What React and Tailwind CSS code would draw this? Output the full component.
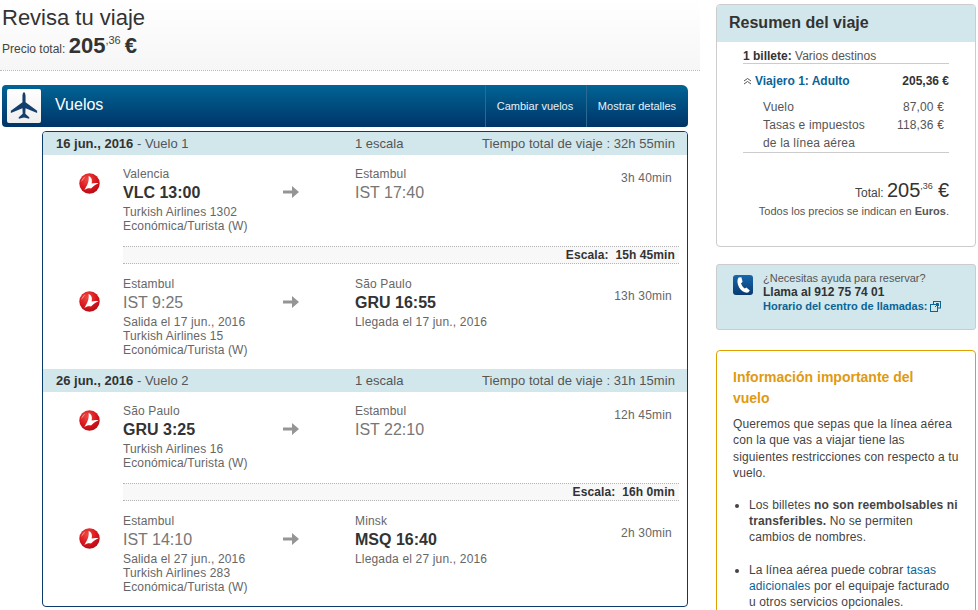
import React from "react";

function TkLogo() {
  return (
    <svg width="21" height="21" viewBox="0 0 21 21" className="block">
      <defs>
        <radialGradient id="tk" cx="40%" cy="30%" r="75%">
          <stop offset="0%" stopColor="#f04a44" />
          <stop offset="60%" stopColor="#d8141c" />
          <stop offset="100%" stopColor="#b00d14" />
        </radialGradient>
      </defs>
      <circle cx="10.5" cy="10.5" r="10.2" fill="url(#tk)" />
      <path d="M9.5 3 C12.5 4 13.5 7 12.6 10.6 C14.8 10 17.2 9.8 19.6 10.4 C16.5 11.4 14 13 12 15.6 C10 15 7.5 15.4 5.4 17 C7.5 13.5 10.6 8.6 9.5 3 Z" fill="#fff" />
      <path d="M2 9 C3 6 4.5 4.5 6.5 3.5 C5 5.5 3.5 7.5 2 9 Z" fill="#f9a09a" />
    </svg>
  );
}

function Arrow() {
  return (
    <svg width="16" height="14" viewBox="0 0 16 14" className="block">
      <path d="M0 5.5 H9 V1 L16 7 L9 13 V8.5 H0 Z" fill="#959595" />
    </svg>
  );
}

function Plane() {
  return (
    <svg width="34" height="34" viewBox="0 0 34 34" className="block">
      <path d="M17 0 C18.4 1 18.9 3 18.9 5 V12.5 L33 22.8 V25.4 L18.9 19.6 L18.6 26.6 L23.4 30.8 V32.4 L17 31 L10.6 32.4 V30.8 L15.4 26.6 L15.1 19.6 L1 25.4 V22.8 L15.1 12.5 V5 C15.1 3 15.6 1 17 0 Z" fill="#143f6c" />
    </svg>
  );
}

function Segment({ logoTop, textTop, durTop, fromCity, from, fromBold, sub, toCity, to, toBold, toSub, dur, h }) {
  return (
    <div className={`flex pl-[36px] ${h}`}>
      <div className="w-[21px] shrink-0" style={{ paddingTop: logoTop }}>
        <TkLogo />
      </div>
      <div className="ml-[23px] w-[160px] shrink-0" style={{ paddingTop: textTop }}>
        <div className="text-[12px] leading-[15px] tracking-[0.15px] text-[#666]">{fromCity}</div>
        <div className={`text-[16px] leading-[22px] ${fromBold ? "font-bold text-[#333]" : "text-[#777]"}`}>{from}</div>
        <div className="mt-[1px] text-[12px] leading-[14px] tracking-[0.15px] text-[#666]">
          {sub.map((s) => (
            <div key={s}>{s}</div>
          ))}
        </div>
      </div>
      <div className="w-[72px] shrink-0" style={{ paddingTop: textTop + 18 }}>
        <Arrow />
      </div>
      <div className="w-[160px] shrink-0" style={{ paddingTop: textTop }}>
        <div className="text-[12px] leading-[15px] tracking-[0.15px] text-[#666]">{toCity}</div>
        <div className={`text-[16px] leading-[22px] ${toBold ? "font-bold text-[#333]" : "text-[#777]"}`}>{to}</div>
        <div className="mt-[1px] text-[12px] leading-[14px] tracking-[0.17px] text-[#666]">{toSub}</div>
      </div>
      <div className="flex-1 pr-[15px] text-right text-[12px] leading-[14px] tracking-[0.2px] text-[#666]" style={{ paddingTop: durTop }}>{dur}</div>
    </div>
  );
}

function Layover({ text }) {
  return (
    <div className="ml-[80px] mr-[8px] h-[18px] whitespace-pre border-y border-dotted border-[#b5b5b5] bg-[#f8f8f8] pr-[4px] text-right text-[12px] leading-[16px] font-bold tracking-[0.1px] text-[#333]">
      {text}
    </div>
  );
}

function DayHeader({ date, n, total }) {
  return (
    <div className="flex h-[23px] bg-[#d2e7ec] pl-[13px] pr-[12px] text-[13px] leading-[23px] text-[#555]">
      <div className="w-[299px] shrink-0">
        <span className="font-bold text-[#333]">{date}</span> - {n}
      </div>
      <div>1 escala</div>
      <div className="ml-auto tracking-[0.06px]">{total}</div>
    </div>
  );
}

export default function App() {
  return (
    <div className="relative flex h-[610px] w-[978px] gap-[16px] overflow-hidden bg-white font-['Liberation_Sans',Arial,sans-serif]">
      <div className="w-[700px] shrink-0">
        <div className="h-[71px] border-b border-dotted border-[#bbb] bg-gradient-to-b from-white to-[#f6f6f6] pl-[2px]">
          <div className="pt-[4px] text-[22px] leading-[27px] text-[#333]">Revisa tu viaje</div>
          <div className="flex items-baseline text-[#444]">
            <span className="text-[12px] leading-[30px]">Precio total:&nbsp;</span>
            <span className="text-[22px] leading-[30px] font-bold text-[#333]">205</span>
            <span className="relative top-[-9px] text-[11px] leading-none">,36</span>
            <span className="ml-[4px] text-[22px] leading-[30px] font-bold text-[#333]">€</span>
          </div>
        </div>
        <div className="mt-[14px] ml-[2px] flex h-[42px] w-[686px] items-stretch rounded-[4px] rounded-tr-[6px] bg-gradient-to-b from-[#006595] to-[#003468]">
          <div className="my-[4px] ml-[5px] flex w-[34px] items-center justify-center rounded-[2px] bg-gradient-to-b from-white to-[#eeeeee]">
            <div className="scale-[0.82]">
              <Plane />
            </div>
          </div>
          <div className="ml-[14px] text-[16px] leading-[39px] text-white">Vuelos</div>
          <div className="ml-auto flex">
            <div className="w-[101px] border-l border-[#2a6a92] pr-[2px] text-center text-[11px] leading-[42px] text-[#e8f2f7]">Cambiar vuelos</div>
            <div className="w-[102px] border-l border-[#2a6a92] pr-[1px] text-center text-[11px] leading-[42px] text-[#e8f2f7]">Mostrar detalles</div>
          </div>
        </div>
        <div className="mt-[4px] ml-[42px] h-[476px] w-[646px] overflow-hidden rounded-[4px] border border-[#0a3a6c]">
          <DayHeader date="16 jun., 2016" n="Vuelo 1" total="Tiempo total de viaje : 32h 55min" />
          <Segment h="h-[91px]" logoTop={18} textTop={12} durTop={16} fromCity="Valencia" from="VLC 13:00" fromBold sub={["Turkish Airlines 1302", "Económica/Turista (W)"]} toCity="Estambul" to="IST 17:40" dur="3h 40min" />
          <Layover text="Escala:  15h 45min" />
          <Segment h="h-[105px]" logoTop={27} textTop={13} durTop={25} fromCity="Estambul" from="IST 9:25" sub={["Salida el 17 jun., 2016", "Turkish Airlines 15", "Económica/Turista (W)"]} toCity="São Paulo" to="GRU 16:55" toBold toSub="Llegada el 17 jun., 2016" dur="13h 30min" />
          <DayHeader date="26 jun., 2016" n="Vuelo 2" total="Tiempo total de viaje : 31h 15min" />
          <Segment h="h-[91px]" logoTop={18} textTop={12} durTop={16} fromCity="São Paulo" from="GRU 3:25" fromBold sub={["Turkish Airlines 16", "Económica/Turista (W)"]} toCity="Estambul" to="IST 22:10" dur="12h 45min" />
          <Layover text="Escala:  16h 0min" />
          <Segment h="h-[105px]" logoTop={27} textTop={13} durTop={25} fromCity="Estambul" from="IST 14:10" sub={["Salida el 27 jun., 2016", "Turkish Airlines 283", "Económica/Turista (W)"]} toCity="Minsk" to="MSQ 16:40" toBold toSub="Llegada el 27 jun., 2016" dur="2h 30min" />
        </div>
      </div>

      <div className="w-[260px] shrink-0 pt-[4px]">
        <div className="h-[243px] overflow-hidden rounded-[4px] border border-[#ccc]">
          <div className="h-[37px] bg-[#d2e7ec] pl-[12px] text-[16px] leading-[36px] font-bold text-[#333]">Resumen del viaje</div>
          <div className="px-[26px]">
            <div className="h-[22px] border-b border-[#ccc] pt-[7px] text-[12px] leading-[14px] text-[#555]">
              <b className="text-[#333]">1 billete:</b> Varios destinos
            </div>
            <div className="mt-[9px] flex justify-between text-[12px] leading-[16px] font-bold">
              <span className="flex items-center text-[#0a6496]">
                <svg width="9" height="8" viewBox="0 0 9 8" className="mr-[3px]">
                  <path d="M1 4 L4.5 1.5 L8 4 M1 7 L4.5 4.5 L8 7" fill="none" stroke="#555" strokeWidth="1" />
                </svg>
                Viajero 1: Adulto
              </span>
              <span className="text-[#333]">205,36 €</span>
            </div>
            <div className="border-b border-[#ccc] pt-[9px] pl-[20px] pr-[5px] text-[12px] leading-[18px] tracking-[0.15px] text-[#555]">
              <div className="flex justify-between"><span>Vuelo</span><span>87,00 €</span></div>
              <div className="flex justify-between"><span>Tasas e impuestos</span><span>118,36 €</span></div>
              <div>de la línea aérea</div>
            </div>
            <div className="mt-[25px] flex items-baseline justify-end text-[#444]">
              <span className="text-[12px]">Total:&nbsp;</span>
              <span className="text-[20px] leading-[24px] text-[#333]">205</span>
              <span className="relative top-[-8px] text-[9px] leading-none">,36</span>
              <span className="ml-[5px] text-[20px] leading-[24px] text-[#333]">€</span>
            </div>
            <div className="mt-[2px] text-right text-[11px] leading-[14px] text-[#555]">
              Todos los precios se indican en <b>Euros</b>.
            </div>
          </div>
        </div>

        <div className="mt-[17px] flex h-[66px] rounded-[3px] border border-[#ccc] bg-[#d2e7ec] pl-[16px] pt-[6px]">
          <svg width="20" height="20" viewBox="0 0 20 20" className="mt-[4px] shrink-0">
            <defs>
              <linearGradient id="ph" x1="0" y1="0" x2="0" y2="1">
                <stop offset="0%" stopColor="#1668ad" />
                <stop offset="100%" stopColor="#093a70" />
              </linearGradient>
            </defs>
            <rect width="20" height="20" rx="3" fill="url(#ph)" />
            <path d="M5.6 2.6 L8.4 2.2 L9.6 7 L8 8.2 C8.6 10.4 10 12.4 11.8 13.6 L13.4 12.4 L16.8 15.4 L15.2 17.6 C11.8 18.4 8.2 15.8 6 12.2 C4.2 9 3.8 5 5.6 2.6 Z" fill="#fff" />
          </svg>
          <div className="ml-[10px] text-[11px] leading-[14px] text-[#555]">
            <div>¿Necesitas ayuda para reservar?</div>
            <div className="text-[12px] font-bold leading-[14px] text-[#333]">Llama al 912 75 74 01</div>
            <div className="flex items-center font-bold leading-[15px] text-[#0a6496]">
              Horario del centro de llamadas:
              <svg width="11" height="11" viewBox="0 0 11 11" className="ml-[3px]">
                <rect x="3.5" y="0.5" width="7" height="6.5" fill="#d2e7ec" stroke="#0a6496" />
                <rect x="0.5" y="3.5" width="7" height="7" fill="#d2e7ec" stroke="#0a6496" />
                <path d="M5 6 L8 3 M6 2.5 H8.5 V5" fill="none" stroke="#0a6496" />
              </svg>
            </div>
          </div>
        </div>

        <div className="mt-[20px] h-[300px] rounded-[4px] border border-[#e0a000] px-[16px] pt-[16px]">
          <div className="text-[14px] leading-[21px] font-bold text-[#e09a12]">Información importante del<br />vuelo</div>
          <div className="mt-[7px] text-[12px] leading-[16.3px] tracking-[0.13px] text-[#444]">
            Queremos que sepas que la línea aérea con la que vas a viajar tiene las siguientes restricciones con respecto a tu vuelo.
          </div>
          <ul className="mt-[16px] list-disc pl-[16px] text-[12px] leading-[16px] tracking-[0.13px] text-[#444]">
            <li>
              Los billetes <b>no son reembolsables ni transferibles.</b> No se permiten cambios de nombres.
            </li>
            <li className="mt-[17px]">
              La línea aérea puede cobrar <span className="text-[#0a6496]">tasas adicionales</span> por el equipaje facturado u otros servicios opcionales.
            </li>
          </ul>
        </div>
      </div>
    </div>
  );
}
